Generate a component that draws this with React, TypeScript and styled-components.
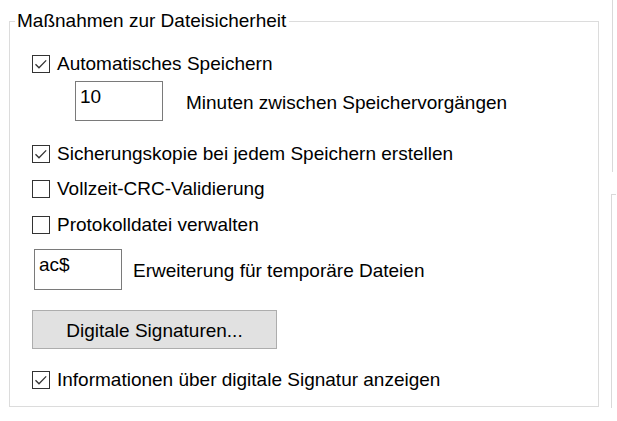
import styled, { createGlobalStyle } from 'styled-components';

const GlobalStyle = createGlobalStyle`
  html, body {
    margin: 0;
    padding: 0;
    background: #ffffff;
  }
  body {
    font-family: "Liberation Sans", Arial, sans-serif;
    font-size: 19px;
    color: #000000;
  }
`

const Page = styled.div`
  width: 617px;
  height: 421px;
  overflow: hidden;
  display: flex;
  align-items: flex-start;
  background: #ffffff;
`

const Group = styled.fieldset`
  box-sizing: border-box;
  width: 592px;
  height: 397px;
  margin: 10px 0 0 9px;
  padding: 0 0 0 22px;
  border: 1px solid #dcdcdc;
  min-width: 0;
  display: flex;
  flex-direction: column;
`

const Legend = styled.legend`
  margin-left: -17px;
  padding: 0 3px 0 2px;
  font-size: 19px;
  line-height: 22px;
  height: 22px;
`

type RowProps = {
  $top: number;
  $indent?: number;
}
const Row = styled.div<RowProps>`
  display: flex;
  align-items: center;
  margin-top: ${p => p.$top}px;
  margin-left: ${p => p.$indent || 0}px;
  line-height: 22px;
  white-space: nowrap;
`

const Box = styled.span`
  box-sizing: border-box;
  width: 18px;
  height: 18px;
  border: 1px solid #333333;
  background: #ffffff;
  display: flex;
  align-items: center;
  justify-content: center;
  margin-right: 7px;
  flex: none;
`

type FieldProps = {
  $width: number;
  $height: number;
  $gap: number;
}
const Field = styled.div<FieldProps>`
  box-sizing: border-box;
  width: ${p => p.$width}px;
  height: ${p => p.$height}px;
  border: 1px solid #7a7a7a;
  background: #ffffff;
  padding: 4px 0 0 4px;
  line-height: 22px;
  margin-right: ${p => p.$gap}px;
  flex: none;
`

const FieldLabel = styled.span`
  padding-top: 3px;
`

const Button = styled.div`
  box-sizing: border-box;
  width: 245px;
  height: 39px;
  background: #e1e1e1;
  border: 1px solid #adadad;
  display: flex;
  align-items: center;
  justify-content: center;
  padding-top: 2px;
`

const SideColumn = styled.div`
  margin-left: 12px;
  display: flex;
  flex-direction: column;
  height: 421px;
`

const SidePanelTop = styled.div`
  width: 4px;
  height: 172px;
  border-left: 1px solid #d9d9d9;
  margin-left: 1px;
`

const SidePanelBottom = styled.div`
  width: 4px;
  height: 213px;
  margin-top: 22px;
  border-left: 1px solid #d9d9d9;
  border-top: 1px solid #d9d9d9;
`

function Check({ checked, label }: { checked: boolean; label: string }) {
  return (
    <>
      <Box>
        {checked && (
          <svg width="16" height="16" viewBox="0 0 16 16">
            <path d="M2.5 8.2 L6 11.8 L13.2 4.4" fill="none" stroke="#333333" strokeWidth="1.3" />
          </svg>
        )}
      </Box>
      <span>{label}</span>
    </>
  );
}

export default function App() {
  return (
    <>
      <GlobalStyle />
      <Page>
        <Group>
          <Legend>{'Maßnahmen zur Dateisicherheit'}</Legend>
          <Row $top={21}>
            <Check checked={true} label="Automatisches Speichern" />
          </Row>
          <Row $top={6} $indent={43}>
            <Field $width={88} $height={40} $gap={23}>10</Field>
            <FieldLabel>Minuten zwischen Speichervorgängen</FieldLabel>
          </Row>
          <Row $top={22}>
            <Check checked={true} label="Sicherungskopie bei jedem Speichern erstellen" />
          </Row>
          <Row $top={13}>
            <Check checked={false} label="Vollzeit-CRC-Validierung" />
          </Row>
          <Row $top={14}>
            <Check checked={false} label="Protokolldatei verwalten" />
          </Row>
          <Row $top={13} $indent={2}>
            <Field $width={88} $height={41} $gap={11}>ac$</Field>
            <FieldLabel>Erweiterung für temporäre Dateien</FieldLabel>
          </Row>
          <Row $top={20}>
            <Button>Digitale Signaturen...</Button>
          </Row>
          <Row $top={20}>
            <Check checked={true} label="Informationen über digitale Signatur anzeigen" />
          </Row>
        </Group>
        <SideColumn>
          <SidePanelTop />
          <SidePanelBottom />
        </SideColumn>
      </Page>
    </>
  );
}
